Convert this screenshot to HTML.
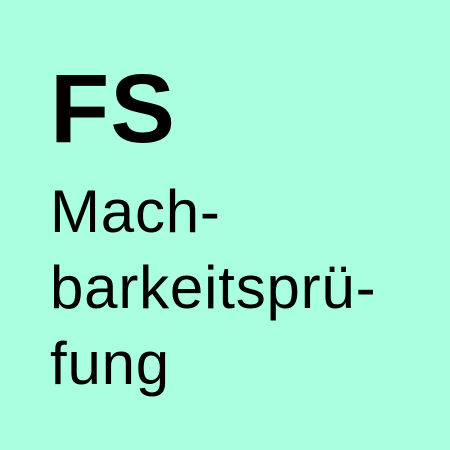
<!DOCTYPE html>
<html><head><style>
html,body{margin:0;padding:0;}
body{width:450px;height:450px;background:#aaffe0;position:relative;overflow:hidden;font-family:"Liberation Sans",sans-serif;color:#000;}
.fs{position:absolute;left:50px;top:109px;font-size:97px;font-weight:bold;line-height:0;letter-spacing:1px;}
.l{position:absolute;left:50px;font-size:60px;line-height:0;letter-spacing:0.8px;}
</style></head><body>
<div class="fs">FS</div>
<div class="l" style="top:212px">Mach-</div>
<div class="l" style="top:288px">barkeitsprü-</div>
<div class="l" style="top:364px">fung</div>
</body></html>
